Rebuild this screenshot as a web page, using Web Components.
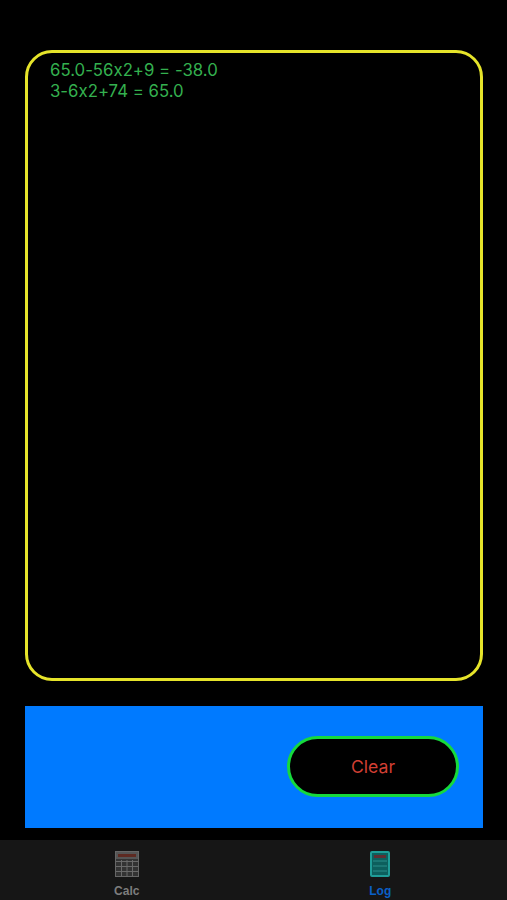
<!DOCTYPE html>
<html>
<head>
<meta charset="utf-8">
<title>Log</title>
<style>
  html, body { margin: 0; height: 100%; background: #000; }
  body { font-family: Inter, "Liberation Sans", sans-serif; overflow: hidden; }
</style>
</head>
<body>
<log-screen>
  <log-panel>
    <log-line>65.0-56x2+9 = -38.0</log-line>
    <log-line>3-6x2+74 = 65.0</log-line>
  </log-panel>
  <action-bar><clear-button>Clear</clear-button></action-bar>
  <tab-bar slot="tabs">
    <tab-item label="Calc" icon="calc"></tab-item>
    <tab-item label="Log" icon="log" active></tab-item>
  </tab-bar>
</log-screen>

<script>
class LogScreen extends HTMLElement {
  constructor() {
    super();
    this.attachShadow({ mode: 'open' });
    this.shadowRoot.innerHTML = `
      <style>
        :host { display: flex; flex-direction: column; height: 900px; background: #000; }
        .main {
          flex: 1;
          display: flex;
          flex-direction: column;
          gap: 25px;
          padding: 50px 24px 12px 25px;
          min-height: 0;
        }
      </style>
      <div class="main"><slot></slot></div>
      <slot name="tabs"></slot>
    `;
  }
}

class LogPanel extends HTMLElement {
  constructor() {
    super();
    this.attachShadow({ mode: 'open' });
    this.shadowRoot.innerHTML = `
      <style>
        :host {
          display: block;
          box-sizing: border-box;
          height: 631px;
          padding: 7px 22px;
          border: 3px solid #e6e42a;
          border-radius: 27px;
        }
      </style>
      <slot></slot>
    `;
  }
}

class LogLine extends HTMLElement {
  constructor() {
    super();
    this.attachShadow({ mode: 'open' });
    this.shadowRoot.innerHTML = `
      <style>
        :host {
          display: block;
          font-size: 16.8px;
          line-height: 21px;
          font-feature-settings: "calt" 0;
          color: #34b04f;
          white-space: nowrap;
        }
      </style>
      <slot></slot>
    `;
  }
}

class ActionBar extends HTMLElement {
  constructor() {
    super();
    this.attachShadow({ mode: 'open' });
    this.shadowRoot.innerHTML = `
      <style>
        :host {
          display: flex;
          align-items: center;
          justify-content: flex-end;
          box-sizing: border-box;
          height: 122px;
          padding: 0 24px 1px 0;
          background: #007aff;
        }
      </style>
      <slot></slot>
    `;
  }
}

class ClearButton extends HTMLElement {
  constructor() {
    super();
    this.attachShadow({ mode: 'open' });
    this.shadowRoot.innerHTML = `
      <style>
        :host {
          display: flex;
          align-items: center;
          justify-content: center;
          box-sizing: border-box;
          width: 172px;
          height: 61px;
          background: #000;
          border: 3px solid #16d93c;
          border-radius: 30.5px;
          color: #d23f33;
          font-size: 17.6px;
        }
      </style>
      <slot></slot>
    `;
  }
}

class TabBar extends HTMLElement {
  constructor() {
    super();
    this.attachShadow({ mode: 'open' });
    this.shadowRoot.innerHTML = `
      <style>
        :host {
          display: grid;
          grid-template-columns: 1fr 1fr;
          height: 60px;
          background: #161616;
        }
      </style>
      <slot></slot>
    `;
  }
}

const TAB_ICONS = {
  calc: `
    <svg width="24" height="26" viewBox="0 0 24 26">
      <rect x="0.5" y="0.5" width="23" height="25" fill="#333" stroke="#666"/>
      <rect x="1" y="1" width="22" height="7" fill="#555"/>
      <rect x="3" y="3" width="18" height="3" fill="#5e2a22"/>
      <path d="M1 10.5H23M1 15.5H23M1 20.5H23M6.5 9V25M12 9V25M17.5 9V25" stroke="#6a6a6a" stroke-width="1"/>
    </svg>`,
  log: `
    <svg width="20" height="26" viewBox="0 0 20 26">
      <rect x="1" y="1" width="18" height="24" rx="1" fill="#0d5f5d" stroke="#1f9d98" stroke-width="2"/>
      <rect x="4" y="4" width="12" height="3" fill="#5e2f33"/>
      <path d="M3 10H17M3 15H17M3 20H17" stroke="#2a8f8b" stroke-width="1"/>
    </svg>`
};

class TabItem extends HTMLElement {
  constructor() {
    super();
    this.attachShadow({ mode: 'open' });
  }

  connectedCallback() {
    const icon = TAB_ICONS[this.getAttribute('icon')] || '';
    this.shadowRoot.innerHTML = `
      <style>
        :host {
          display: flex;
          flex-direction: column;
          align-items: center;
          padding-top: 11px;
          font-family: "Liberation Sans", sans-serif;
          font-size: 12px;
          font-weight: 700;
          color: #7d7d7d;
        }
        :host([active]) { color: #0a60c8; }
        svg { display: block; }
        .label { margin-top: 7px; line-height: 14px; }
      </style>
      ${icon}
      <span class="label">${this.getAttribute('label')}</span>
    `;
  }
}

customElements.define('log-screen', LogScreen);
customElements.define('log-panel', LogPanel);
customElements.define('log-line', LogLine);
customElements.define('action-bar', ActionBar);
customElements.define('clear-button', ClearButton);
customElements.define('tab-bar', TabBar);
customElements.define('tab-item', TabItem);
</script>
</body>
</html>
